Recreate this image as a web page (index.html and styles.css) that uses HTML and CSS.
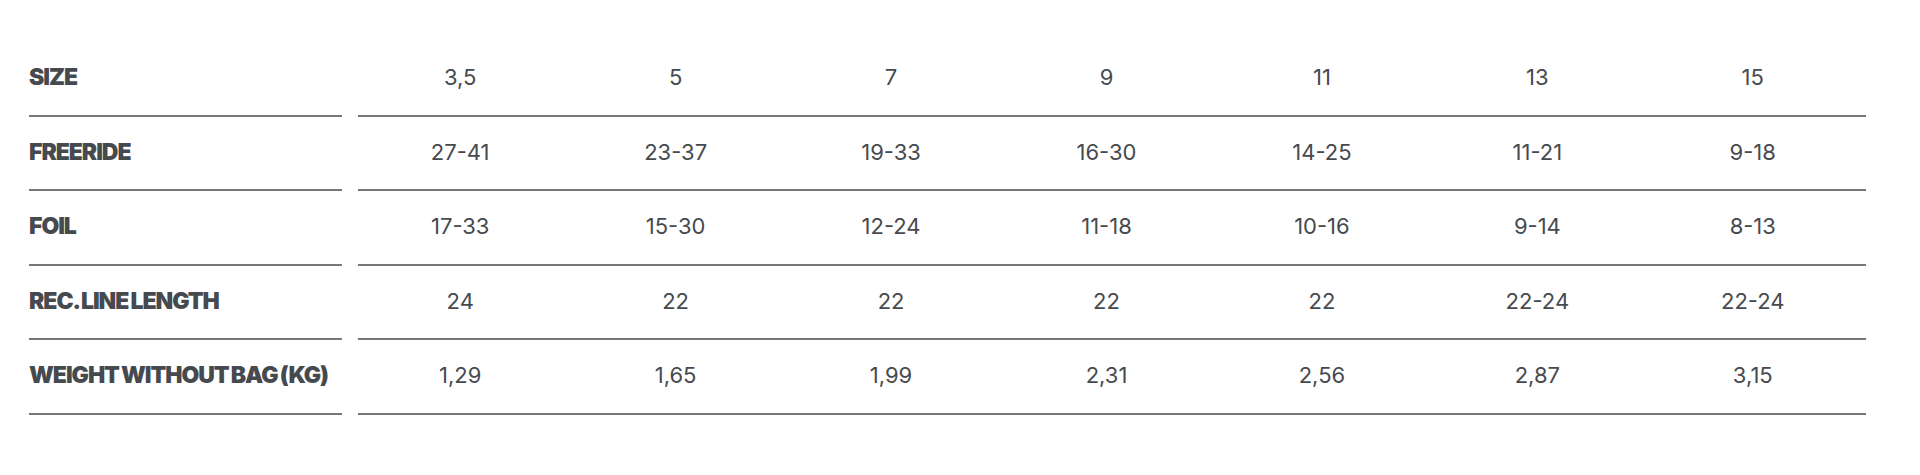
FILE: index.html
```html
<!DOCTYPE html>
<html lang="en">
<head>
<meta charset="utf-8">
<title>Size chart</title>
<link rel="stylesheet" href="styles.css">
</head>
<body>
<div class="chart">
  <div class="row">
    <div class="label">SIZE</div>
    <div class="cells"><span>3,5</span><span>5</span><span>7</span><span>9</span><span>11</span><span>13</span><span>15</span></div>
  </div>
  <div class="row">
    <div class="label">FREERIDE</div>
    <div class="cells"><span>27-41</span><span>23-37</span><span>19-33</span><span>16-30</span><span>14-25</span><span>11-21</span><span>9-18</span></div>
  </div>
  <div class="row">
    <div class="label">FOIL</div>
    <div class="cells"><span>17-33</span><span>15-30</span><span>12-24</span><span>11-18</span><span>10-16</span><span>9-14</span><span>8-13</span></div>
  </div>
  <div class="row">
    <div class="label">REC. LINE LENGTH</div>
    <div class="cells"><span>24</span><span>22</span><span>22</span><span>22</span><span>22</span><span>22-24</span><span>22-24</span></div>
  </div>
  <div class="row">
    <div class="label">WEIGHT WITHOUT BAG (KG)</div>
    <div class="cells"><span>1,29</span><span>1,65</span><span>1,99</span><span>2,31</span><span>2,56</span><span>2,87</span><span>3,15</span></div>
  </div>
</div>
</body>
</html>
```
FILE: styles.css
```css
html, body {
  margin: 0;
  padding: 0;
  background: #ffffff;
}
.chart {
  padding-top: 42px;
  padding-left: 29px;
  color: #464a4f;
}
.row {
  display: flex;
  height: 74.5px;
}
.label {
  width: 313px;
  margin-right: 16px;
  box-sizing: border-box;
  border-bottom: 2px solid #77787b;
  padding-bottom: 2px;
  display: flex;
  align-items: center;
  white-space: nowrap;
  font-family: "Inter", "Liberation Sans", sans-serif;
  font-weight: 900;
  font-size: 23px;
  letter-spacing: -0.045em;
  word-spacing: -0.06em;
}
.cells {
  width: 1508px;
  box-sizing: border-box;
  border-bottom: 2px solid #77787b;
  display: grid;
  grid-template-columns: repeat(7, 1fr);
  font-family: "Inter", "Liberation Sans", sans-serif;
  font-weight: 400;
  font-size: 22px;
}
.cells span {
  display: flex;
  align-items: center;
  justify-content: center;
  padding-right: 11px;
  padding-bottom: 2px;
}
```
